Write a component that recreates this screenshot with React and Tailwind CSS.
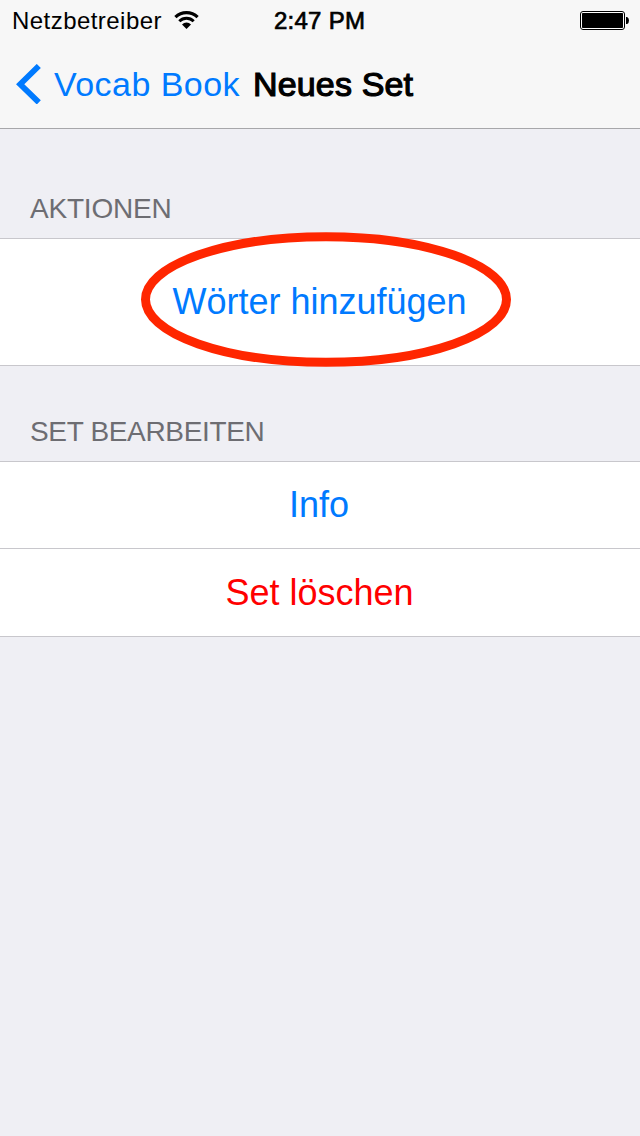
function WifiIcon() {
  return (
    <svg className="ml-[12px] h-[20px] w-[26px]" viewBox="174 10 26 20" fill="none" stroke="#000">
      <path d="M175.4 17.2a16 16 0 0 1 22.2 0" strokeWidth="3.2" />
      <path d="M179.3 21.3a10.2 10.2 0 0 1 14.4 0" strokeWidth="2.9" />
      <path d="M182 24.4a6.4 6.4 0 0 1 9 0L186.5 29z" fill="#000" stroke="none" />
    </svg>
  );
}

function BatteryIcon() {
  return (
    <svg className="ml-auto h-[20px] w-[50px]" viewBox="580 10 50 20">
      <rect x="580.5" y="11.5" width="44" height="18" rx="2.5" fill="#fff" stroke="#000" />
      <rect x="582" y="13" width="41" height="15" rx="0.8" fill="#000" />
      <path d="M626 17h1.2q1.8 1 1.8 3.5t-1.8 3.5H626z" fill="#000" />
    </svg>
  );
}

function StatusBar() {
  return (
    <div className="relative flex h-10 items-center pr-[10px] pl-[12px] text-[24px] leading-10">
      <span className="w-[150px] pt-[2px] leading-[38px] tracking-[0.45px] whitespace-nowrap">Netzbetreiber</span>
      <WifiIcon />
      <span className="absolute top-[1px] left-[274px] tracking-[0.25px] whitespace-nowrap [-webkit-text-stroke:0.7px_#000]">
        2:47 PM
      </span>
      <BatteryIcon />
    </div>
  );
}

function NavBar() {
  return (
    <div className="flex h-[88px] items-center pl-[16px] text-[34px] leading-[88px] whitespace-nowrap">
      <svg className="h-[40px] w-[25px]" viewBox="0 0 25 40" fill="none" stroke="#007aff" strokeWidth="5.8">
        <path d="M22.8 2 4.2 20.3 22.8 38.4" />
      </svg>
      <span className="ml-[13px] w-[199px] tracking-[0.45px] text-[#007aff]">Vocab Book</span>
      <h1 className="tracking-[0.15px] [-webkit-text-stroke:1.2px_#000]">Neues Set</h1>
    </div>
  );
}

function SectionTitle({ className, children }) {
  return <h2 className={"pl-[30px] text-[28px] leading-[60px] text-[#6d6d72] " + className}>{children}</h2>;
}

export default function App() {
  return (
    <div className="flex h-[1136px] w-[640px] flex-col overflow-hidden bg-[#efeff4] font-['Liberation_Sans',Arial,sans-serif] text-black">
      <header className="h-[129px] border-b border-[#a7a7aa] bg-[#f7f7f7]">
        <StatusBar />
        <NavBar />
      </header>

      <SectionTitle className="h-[109px] pt-[50px] tracking-[-0.2px]">AKTIONEN</SectionTitle>
      <div className="relative flex h-[128px] items-center justify-center border-y border-[#c8c7cc] bg-white">
        <button className="pr-[1px] text-[36px] leading-[44px] text-[#007aff]">Wörter hinzufügen</button>
        <svg className="absolute top-[-9px] left-[138px] h-[140px] w-[376px]" viewBox="138 230 376 140" fill="none">
          <ellipse cx="326" cy="299.5" rx="180.5" ry="62.8" stroke="#ff2600" strokeWidth="9" />
        </svg>
      </div>

      <SectionTitle className="h-[95px] pt-[36px] tracking-[-0.33px]">SET BEARBEITEN</SectionTitle>
      <div className="flex flex-col border-y border-[#c8c7cc] bg-white text-[36px]">
        <button className="h-[87px] border-b border-[#c8c7cc] pr-[2px] leading-[86px] text-[#007aff]">Info</button>
        <button className="h-[87px] pr-[1px] leading-[87px] text-[#ff0000]">Set löschen</button>
      </div>
    </div>
  );
}
